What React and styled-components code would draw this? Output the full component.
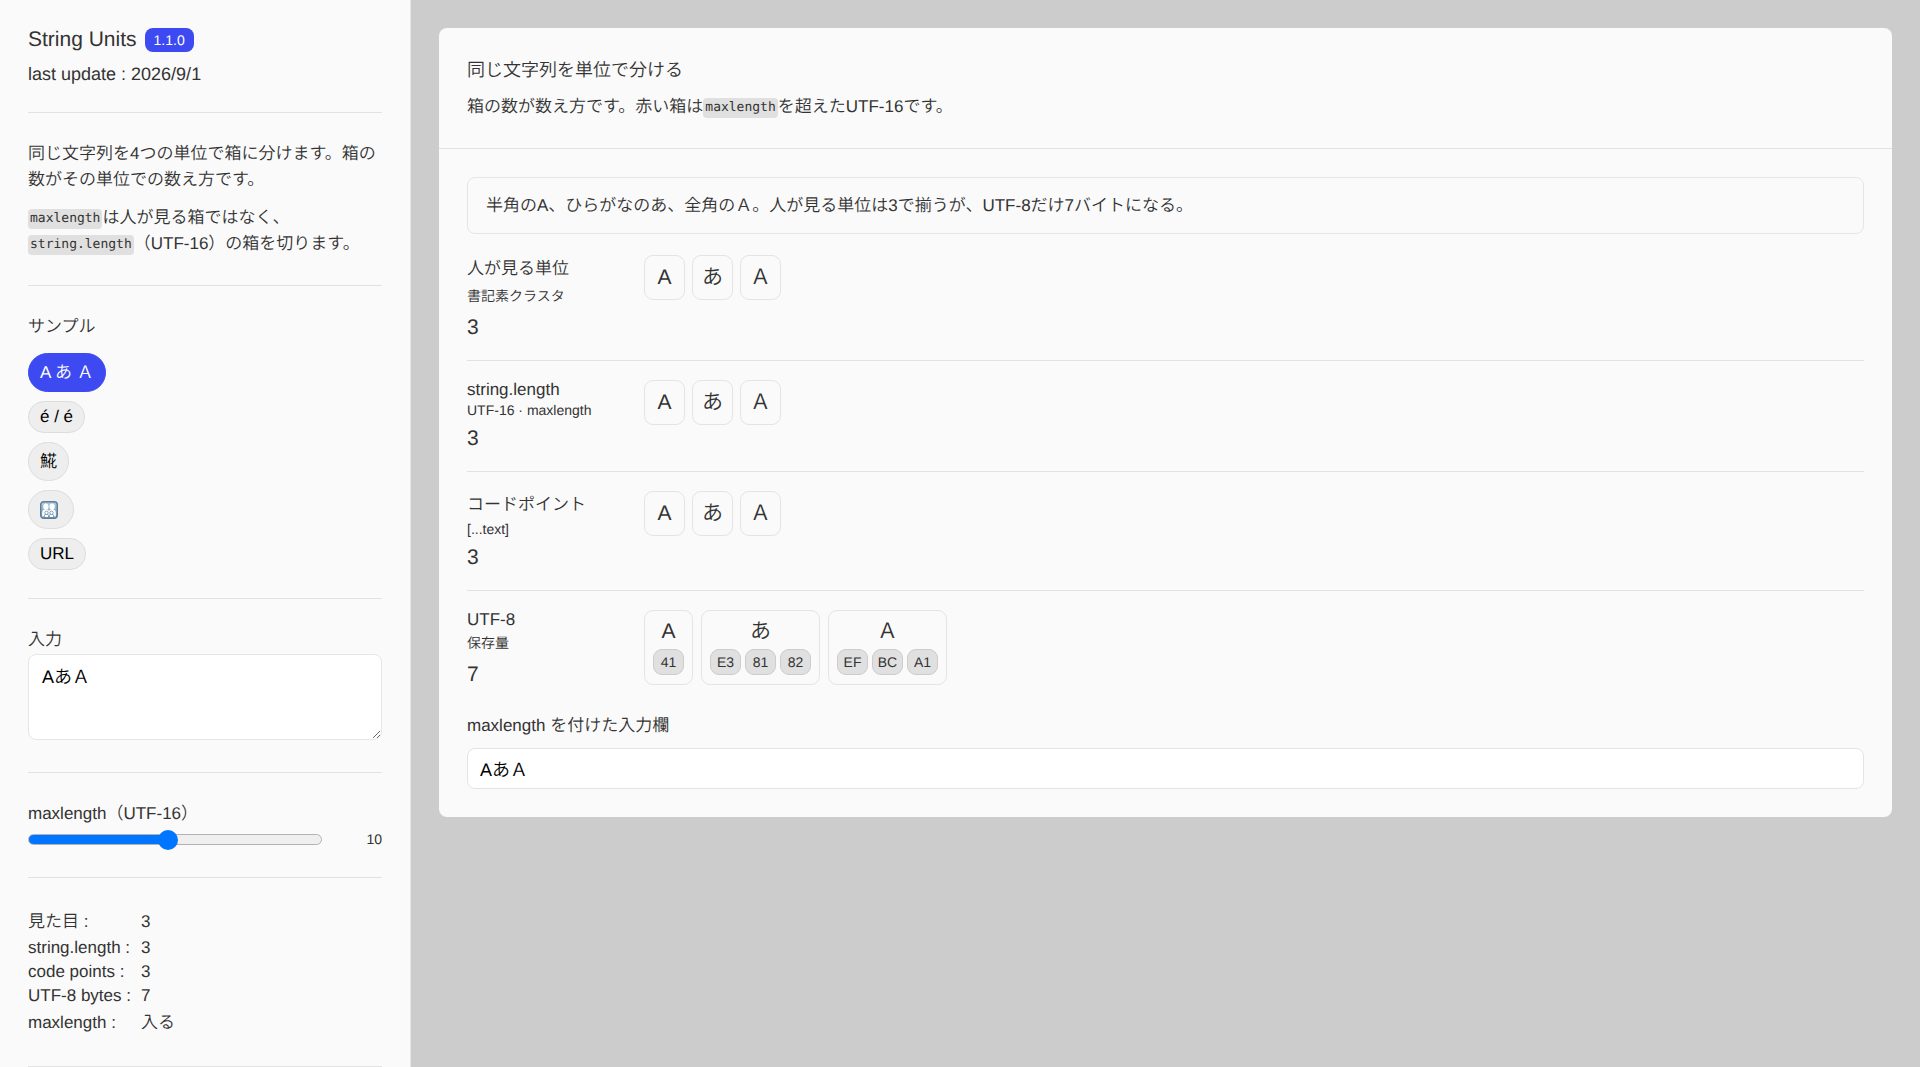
import React from "react";
import styled, { createGlobalStyle } from "styled-components";

const samples = [
  { id: "width", label: "A あ Ａ", text: "AあＡ", tall: true },
  { id: "accent", label: "é / e\u0301", text: "ée\u0301" },
  { id: "hokke", label: "𩸽", text: "𩸽", tall: true },
  { id: "family", label: "", text: "👨‍👩‍👧‍👦", tall: true },
  { id: "url", label: "URL", text: "https://example.com/あ" },
];

const segmenter = new Intl.Segmenter("ja", { granularity: "grapheme" });
const encoder = new TextEncoder();

const toGraphemes = (text) => [...segmenter.segment(text)].map((s) => s.segment);
const toBytes = (char) =>
  [...encoder.encode(char)].map((b) => b.toString(16).toUpperCase().padStart(2, "0"));

const FamilyIcon = () => (
  <svg width="18" height="18" viewBox="0 0 18 18" aria-hidden="true">
    <defs>
      <linearGradient id="family-bg" x1="0" y1="0" x2="0" y2="1">
        <stop offset="0" stopColor="#b4cbdd" />
        <stop offset="1" stopColor="#7797b3" />
      </linearGradient>
    </defs>
    <rect x="0.7" y="0.7" width="16.6" height="16.6" rx="3" fill="url(#family-bg)" stroke="#5d7f9e" strokeWidth="1.4" />
    <g fill="#fff">
      <ellipse cx="5.9" cy="5.8" rx="2.6" ry="3.2" />
      <ellipse cx="12.1" cy="5.8" rx="2.6" ry="3.2" />
      <path d="M2.2 15.4V11.4Q2.2 9 4.4 8.8H7.4Q9 9 9 10.4Q9 9 10.6 8.8H13.6Q15.8 9 15.8 11.4V15.4Z" />
    </g>
    <g fill="#fff" stroke="#7494b0" strokeWidth="0.9">
      <path d="M4.4 16V14.8Q4.4 13.4 5.8 13.4H7.2Q8.6 13.4 8.6 14.8V16M9.4 16V14.8Q9.4 13.4 10.8 13.4H12.2Q13.6 13.4 13.6 14.8V16" />
      <circle cx="6.5" cy="11.8" r="1.7" />
      <circle cx="11.5" cy="11.8" r="1.7" />
    </g>
  </svg>
);

const UnitRow = ({ title, note, count, tallTitle, tallNote, wide, children }) => (
  <Row>
    <div>
      <RowTitle $tall={tallTitle}>{title}</RowTitle>
      <RowNote $tall={tallNote}>{note}</RowNote>
      <RowCount>{count}</RowCount>
    </div>
    <Boxes $wide={wide}>{children}</Boxes>
  </Row>
);

const App = () => {
  const [active, setActive] = React.useState("width");
  const [text, setText] = React.useState("AあＡ");
  const [max, setMax] = React.useState(10);

  const graphemes = toGraphemes(text);
  const units = text.split("");
  const points = [...text];
  const byteCount = encoder.encode(text).length;

  const pick = (sample) => {
    setActive(sample.id);
    setText(sample.text);
  };

  return (
    <>
      <GlobalStyle />
      <Layout>
        <Sidebar>
          <Section>
            <TitleLine>
              <Title>String Units</Title>
              <Version>1.1.0</Version>
            </TitleLine>
            <Update>last update : 2026/9/1</Update>
          </Section>
          <Section>
            <Text>同じ文字列を4つの単位で箱に分けます。箱の数がその単位での数え方です。</Text>
            <Text>
              <Code>maxlength</Code>は人が見る箱ではなく、<Code>string.length</Code>（UTF-16）の箱を切ります。
            </Text>
          </Section>
          <Section>
            <SampleTitle>サンプル</SampleTitle>
            <SampleList>
              {samples.map((sample) => (
                <SampleButton
                  key={sample.id}
                  type="button"
                  $active={sample.id === active}
                  $tall={sample.tall}
                  $icon={sample.id === "family"}
                  aria-label={sample.id === "family" ? "家族" : undefined}
                  onClick={() => pick(sample)}
                >
                  {sample.id === "family" ? <FamilyIcon /> : sample.label}
                </SampleButton>
              ))}
            </SampleList>
          </Section>
          <Section>
            <Label htmlFor="source">入力</Label>
            <TextArea id="source" value={text} onChange={(e) => setText(e.target.value)} />
          </Section>
          <Section>
            <Label htmlFor="max">maxlength（UTF-16）</Label>
            <SliderLine>
              <Slider
                id="max"
                type="range"
                min="1"
                max="20"
                value={max}
                style={{ "--fill": `${((max - 1) / 19) * 100}%` }}
                onChange={(e) => setMax(Number(e.target.value))}
              />
              <output htmlFor="max">{max}</output>
            </SliderLine>
          </Section>
          <Section>
            <Stats>
              <dt>見た目 :</dt>
              <dd>{graphemes.length}</dd>
              <dt>string.length :</dt>
              <dd>{units.length}</dd>
              <dt>code points :</dt>
              <dd>{points.length}</dd>
              <dt>UTF-8 bytes :</dt>
              <dd>{byteCount}</dd>
              <dt>maxlength :</dt>
              <dd>{units.length <= max ? "入る" : "超える"}</dd>
            </Stats>
          </Section>
        </Sidebar>
        <Main>
          <Card>
            <CardHeader>
              <CardTitle>同じ文字列を単位で分ける</CardTitle>
              <Text>
                箱の数が数え方です。赤い箱は<Code>maxlength</Code>を超えたUTF-16です。
              </Text>
            </CardHeader>
            <CardBody>
              <Note>半角のA、ひらがなのあ、全角のＡ。人が見る単位は3で揃うが、UTF-8だけ7バイトになる。</Note>
              <UnitRow title="人が見る単位" note="書記素クラスタ" count={graphemes.length} tallTitle tallNote>
                {graphemes.map((char, i) => <Box key={i}>{char}</Box>)}
              </UnitRow>
              <UnitRow title="string.length" note="UTF-16 · maxlength" count={units.length}>
                {units.map((char, i) => <Box key={i} $over={i >= max}>{char}</Box>)}
              </UnitRow>
              <UnitRow title="コードポイント" note="[...text]" count={points.length} tallTitle>
                {points.map((char, i) => <Box key={i}>{char}</Box>)}
              </UnitRow>
              <UnitRow title="UTF-8" note="保存量" count={byteCount} tallNote wide>
                {points.map((char, i) => (
                  <ByteBox key={i}>
                    <span>{char}</span>
                    <Bytes>
                      {toBytes(char).map((byte, j) => <Byte key={j}>{byte}</Byte>)}
                    </Bytes>
                  </ByteBox>
                ))}
              </UnitRow>
              <LimitedField>
                <Label htmlFor="limited">maxlength を付けた入力欄</Label>
                <TextInput
                  id="limited"
                  type="text"
                  maxLength={max}
                  value={text}
                  onChange={(e) => setText(e.target.value)}
                />
              </LimitedField>
            </CardBody>
          </Card>
        </Main>
      </Layout>
    </>
  );
};

const GlobalStyle = createGlobalStyle`
  * {
    box-sizing: border-box;
  }
  body {
    margin: 0;
    background-color: #ccc;
    color: #333;
    font-family: "Liberation Sans", "Noto Sans CJK JP", sans-serif;
    font-size: 17px;
    font-weight: 350;
    text-rendering: geometricPrecision;
  }
  h1, h2, h3 {
    font-weight: inherit;
  }
  button, input, textarea {
    font-family: inherit;
    font-weight: inherit;
    text-rendering: inherit;
  }
`;

const Layout = styled.div`
  display: flex;
  align-items: stretch;
  min-height: 100vh;
`;

const Sidebar = styled.aside`
  flex: 0 0 411px;
  padding: 0 28px;
  background-color: #fafafa;
  border-right: 1px solid #e6e6e6;
`;

const Section = styled.section`
  padding: 28px 0;
  border-bottom: 1px solid #e2e2e2;
`;

const TitleLine = styled.div`
  display: flex;
  align-items: center;
  gap: 8px;
`;

const Title = styled.h1`
  margin: 0;
  font-size: 21px;
  line-height: 24px;
`;

const Version = styled.span`
  padding: 0 9px;
  border-radius: 8px;
  background-color: #3d4af2;
  color: #fff;
  font-size: 14px;
  line-height: 24px;
`;

const Update = styled.p`
  margin: 12px 0 0;
  font-size: 18px;
  line-height: 20px;
`;

const Text = styled.p`
  margin: 0;
  line-height: 26px;
  & + & {
    margin-top: 12px;
  }
`;

const Code = styled.code`
  padding: 2px 2px 3px;
  border-radius: 4px;
  background-color: #e0e0e0;
  font-family: "DejaVu Sans Mono", monospace;
  font-size: 13px;
  line-height: 16px;
  vertical-align: 1px;
`;

const SampleTitle = styled.h2`
  margin: 0 0 14px;
  font-size: 17px;
  line-height: 25px;
`;

const SampleList = styled.div`
  display: flex;
  flex-direction: column;
  align-items: flex-start;
  gap: 9px;
`;

const SampleButton = styled.button`
  display: flex;
  align-items: center;
  min-height: ${props => props.$tall ? '39px' : '32px'};
  padding: ${props => props.$icon ? '0 15px 0 11px' : '0 11px'};
  border: 1px solid ${props => props.$active ? '#3d4af2' : '#ddd'};
  border-radius: 20px;
  background-color: ${props => props.$active ? '#3d4af2' : '#eee'};
  color: ${props => props.$active ? '#fff' : '#000'};
  font-size: 17px;
  line-height: 20px;
  cursor: pointer;
`;

const Label = styled.label`
  display: block;
  line-height: 25px;
`;

const TextArea = styled.textarea`
  display: block;
  width: 100%;
  height: 86px;
  margin: 2px 0 4px;
  padding: 10px 13px;
  border: 1px solid #e6e6e6;
  border-radius: 8px;
  background-color: #fff;
  color: #000;
  font-size: 18px;
  line-height: 25px;
  resize: vertical;
`;

const SliderLine = styled.div`
  display: flex;
  align-items: center;
  justify-content: space-between;
  margin-top: 3px;
  font-size: 14px;
`;

const Slider = styled.input`
  flex: 0 0 294px;
  height: 20px;
  margin: 0;
  appearance: none;
  background: transparent;
  &::-webkit-slider-runnable-track {
    height: 11px;
    border: 1px solid #b2b2b2;
    border-radius: 6px;
    background: linear-gradient(to right, #0075ff var(--fill), #efefef var(--fill));
  }
  &::-webkit-slider-thumb {
    appearance: none;
    width: 20px;
    height: 20px;
    margin-top: -5px;
    border-radius: 50%;
    background-color: #0075ff;
  }
`;

const Stats = styled.dl`
  display: grid;
  grid-template-columns: max-content 1fr;
  grid-template-rows: 25px 20px 20px 20px 25px;
  align-items: center;
  gap: 4px 10px;
  margin: 3px 0;
  line-height: 20px;
  dd {
    margin: 0;
  }
`;

const Main = styled.main`
  flex: 1;
  min-width: 0;
  padding: 28px;
`;

const Card = styled.article`
  border-radius: 8px;
  background-color: #fafafa;
`;

const CardHeader = styled.header`
  padding: 28px;
  border-bottom: 1px solid #e2e2e2;
`;

const CardTitle = styled.h2`
  margin: 0 0 10px;
  font-size: 18px;
  line-height: 28px;
`;

const CardBody = styled.div`
  padding: 28px;
`;

const Note = styled.p`
  margin: 0 0 2px;
  padding: 14px 18px;
  border: 1px solid #e6e6e6;
  border-radius: 8px;
  line-height: 27px;
`;

const Row = styled.section`
  display: grid;
  grid-template-columns: 169px 1fr;
  gap: 8px;
  padding: 19px 0 20px;
  border-bottom: 1px solid #e2e2e2;
  &:last-of-type {
    border-bottom: 0;
  }
`;

const RowTitle = styled.h3`
  margin: 0;
  font-size: 17px;
  line-height: ${props => props.$tall ? '28px' : '20px'};
`;

const RowNote = styled.p`
  margin: 2px 0 8px;
  font-size: 14px;
  line-height: ${props => props.$tall ? '23px' : '17px'};
`;

const RowCount = styled.p`
  margin: 0;
  font-size: 21px;
  line-height: 24px;
`;

const Boxes = styled.div`
  display: flex;
  flex-wrap: wrap;
  align-items: flex-start;
  gap: ${props => props.$wide ? '8px' : '7px'};
`;

const Box = styled.span`
  min-width: 41px;
  padding: 0 9px;
  border: 1px solid ${props => props.$over ? '#e33' : '#e4e4e4'};
  border-radius: 9px;
  font-size: 21px;
  line-height: 43px;
  text-align: center;
`;

const ByteBox = styled.div`
  padding: 6px 8px 9px;
  border: 1px solid #e4e4e4;
  border-radius: 9px;
  font-size: 21px;
  line-height: 30px;
  text-align: center;
`;

const Bytes = styled.div`
  display: flex;
  gap: 4px;
  margin-top: 2px;
`;

const Byte = styled.span`
  min-width: 31px;
  padding: 0 4px;
  border: 1px solid #ccc;
  border-radius: 9px;
  background-color: #e0e0e0;
  font-size: 14px;
  line-height: 24px;
`;

const LimitedField = styled.div`
  padding-top: 6px;
`;

const TextInput = styled.input`
  display: block;
  width: 100%;
  height: 41px;
  margin-top: 10px;
  padding: 0 12px;
  border: 1px solid #e4e4e4;
  border-radius: 8px;
  background-color: #fff;
  color: #000;
  font-size: 18px;
`;

export default App;
